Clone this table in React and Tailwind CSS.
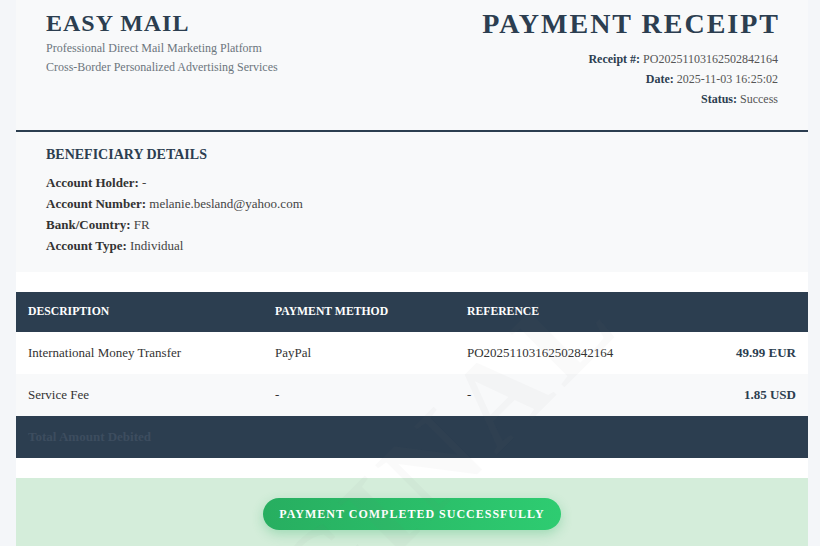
import React from 'react';

const serif = { fontFamily: '"Liberation Serif", "Times New Roman", serif' };

const rows = [
  { desc: 'International Money Transfer', method: 'PayPal', ref: 'PO20251103162502842164', amount: '49.99 EUR', bg: 'bg-white' },
  { desc: 'Service Fee', method: '-', ref: '-', amount: '1.85 USD', bg: 'bg-[#f8f9fa]' },
];

export default function App() {
  return (
    <div className="relative min-h-screen overflow-hidden bg-[#f4f6f9]" style={serif}>
      <div className="ml-4 mr-3 bg-white">
        {/* Header */}
        <div className="flex justify-between bg-[#f8f9fa] px-[30px] pt-[9px] pb-[21px] border-b-2 border-[#2c3e50]">
          <div>
            <h1 className="text-[24px] leading-[29px] font-bold tracking-[1px] text-[#2c3e50]">EASY MAIL</h1>
            <p className="mt-[1px] text-[12px] leading-[19px] text-[#6c757d]">Professional Direct Mail Marketing Platform</p>
            <p className="text-[12px] leading-[19px] text-[#6c757d]">Cross-Border Personalized Advertising Services</p>
          </div>
          <div className="text-right">
            <h2 className="text-[28px] leading-[30px] font-bold tracking-[2px] text-[#2c3e50] -mr-[2px]">PAYMENT RECEIPT</h2>
            <div className="mt-[10px] text-[12px] leading-[20px] text-[#555]">
              <p><span className="font-bold text-[#2c3e50]">Receipt #:</span> PO20251103162502842164</p>
              <p><span className="font-bold text-[#2c3e50]">Date:</span> 2025-11-03 16:25:02</p>
              <p><span className="font-bold text-[#2c3e50]">Status:</span> Success</p>
            </div>
          </div>
        </div>

        {/* Beneficiary */}
        <div className="bg-[#f8f9fa] px-[30px] pt-[14px] pb-[16px]">
          <h3 className="text-[14px] leading-[18px] font-bold text-[#2c3e50]">BENEFICIARY DETAILS</h3>
          <div className="mt-[8px] text-[13px] leading-[21px] text-[#444]">
            <p><span className="font-bold text-[#333]">Account Holder:</span> -</p>
            <p><span className="font-bold text-[#333]">Account Number:</span> melanie.besland@yahoo.com</p>
            <p><span className="font-bold text-[#333]">Bank/Country:</span> FR</p>
            <p><span className="font-bold text-[#333]">Account Type:</span> Individual</p>
          </div>
        </div>

        {/* Table */}
        <div className="pt-5 pb-5 bg-white">
          <div className="grid grid-cols-[247px_192px_1fr_auto] h-10 items-center bg-[#2c3e50] text-[11.7px] font-bold text-white">
            <div className="px-3">DESCRIPTION</div>
            <div className="px-3">PAYMENT METHOD</div>
            <div className="px-3">REFERENCE</div>
            <div className="px-3"></div>
          </div>
          {rows.map((r) => (
            <div key={r.desc} className={`grid grid-cols-[247px_192px_1fr_auto] h-[42px] items-center text-[13px] text-[#333] ${r.bg}`}>
              <div className="px-3">{r.desc}</div>
              <div className="px-3">{r.method}</div>
              <div className="px-3">{r.ref}</div>
              <div className="px-3 text-right font-bold text-[#2c3e50]">{r.amount}</div>
            </div>
          ))}
          <div className="flex h-[42px] items-center justify-between bg-[#2c3e50] px-3 text-[13px] font-bold text-[#3d4d5f]">
            <span>Total Amount Debited</span>
            <span></span>
          </div>
        </div>

        {/* Success */}
        <div className="flex justify-center bg-[#d4edda] pt-5 pb-8">
          <div className="flex h-8 items-center rounded-full bg-gradient-to-r from-[#27ae60] to-[#2ecc71] px-4 text-[12px] font-bold tracking-[1px] text-white shadow-[0_4px_12px_rgba(39,174,96,0.3)]">
            PAYMENT COMPLETED SUCCESSFULLY
          </div>
        </div>
      </div>

      {/* Watermark */}
      <div className="pointer-events-none absolute left-[355px] top-[540px] -translate-x-1/2 -translate-y-1/2 -rotate-45 whitespace-nowrap text-[120px] font-bold tracking-[8px] text-[rgba(120,120,120,0.04)]">
        ORIGINAL
      </div>
    </div>
  );
}
